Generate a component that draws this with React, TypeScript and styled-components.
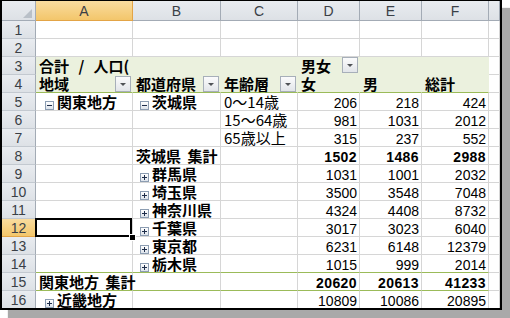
import React from 'react';
import styled, { createGlobalStyle, css } from 'styled-components';

const GRID = '#d6d6d6';
const BAND = '#ebf1de';
const GREEN = '#9bbb59';
const HEAD_LINE = '#a3abb5';

const Global = createGlobalStyle`
  html, body { margin: 0; padding: 0; background: #fff; }
  body { width: 510px; height: 318px; overflow: hidden; }
`;

const Frame = styled.div`
  box-sizing: border-box;
  width: 502px;
  height: 310px;
  border: 2px solid #000;
  border-top-width: 1px;
  box-shadow: 8px 8px 1px #a9a9a9;
  background: #fff;
  overflow: hidden;
`;

const Sheet = styled.div`
  display: grid;
  grid-template-columns: 34px 97px 88px 77px 62px 62px 67px 1fr;
  grid-template-rows: 20px repeat(16, 18px);
`;

const Corner = styled.div`
  box-sizing: border-box;
  display: flex;
  align-items: flex-end;
  justify-content: flex-end;
  padding: 0 3px 2px 0;
  background: linear-gradient(#e9ecf0, #dde1e6);
  border-right: 1px solid ${HEAD_LINE};
  border-bottom: 1px solid ${HEAD_LINE};
`;

const CornerMark = styled.span`
  width: 0;
  height: 0;
  border-left: 9px solid transparent;
  border-bottom: 9px solid #b9c0c8;
`;

const headFace = css<{ $on?: boolean }>`
  box-sizing: border-box;
  font-family: 'Liberation Sans', 'DejaVu Sans', sans-serif;
  font-size: 14px;
  color: #3a3f46;
  text-align: center;
  background: ${(p) =>
    p.$on ? 'linear-gradient(#f9dc9f, #f3c66b)' : 'linear-gradient(#e9ecf0, #dde1e6)'};
`;

const ColHead = styled.div<{ $on?: boolean }>`
  ${headFace};
  line-height: 17px;
  padding-top: 2px;
  border-right: 1px solid ${(p) => (p.$on ? '#e3a446' : HEAD_LINE)};
  border-bottom: 1px solid ${(p) => (p.$on ? '#e3a446' : HEAD_LINE)};
`;

const RowHead = styled.div<{ $on?: boolean }>`
  ${headFace};
  line-height: 15px;
  padding-top: 2px;
  border-right: 1px solid ${(p) => (p.$on ? '#e3a446' : HEAD_LINE)};
  border-bottom: 1px solid ${(p) => (p.$on ? '#e3a446' : '#c3c9d0')};
`;

const Cell = styled.div<{
  $band?: boolean;
  $line?: boolean;
  $num?: boolean;
  $active?: boolean;
}>`
  position: relative;
  box-sizing: border-box;
  min-width: 0;
  display: flex;
  align-items: flex-start;
  justify-content: ${(p) => (p.$num ? 'flex-end' : 'flex-start')};
  padding: 0 ${(p) => (p.$num ? '2px' : '0')} 0 3px;
  background: ${(p) => (p.$band ? BAND : 'transparent')};
  border-right: 1px solid ${(p) => (p.$band ? BAND : GRID)};
  border-bottom: 1px solid ${(p) => (p.$line ? GREEN : p.$band ? BAND : GRID)};

  ${(p) =>
    p.$active &&
    css`
      &::before {
        content: '';
        position: absolute;
        z-index: 2;
        inset: -1px 0 -1px -1px;
        border: 2px solid #000;
      }
      &::after {
        content: '';
        position: absolute;
        z-index: 3;
        right: -3px;
        bottom: -4px;
        width: 5px;
        height: 5px;
        background: #000;
        box-shadow: 0 0 0 1px #fff;
      }
    `}
`;

const Label = styled.span<{ $bold?: boolean; $ws?: number }>`
  font-family: 'Noto Sans CJK JP', 'Liberation Sans', sans-serif;
  font-size: 15px;
  line-height: 17px;
  font-weight: ${(p) => (p.$bold ? 700 : 400)};
  word-spacing: ${(p) => p.$ws ?? 3}px;
  color: #000;
  white-space: nowrap;
`;

const Num = styled.span<{ $bold?: boolean }>`
  font-family: 'Liberation Sans', 'DejaVu Sans', sans-serif;
  font-size: 14px;
  line-height: 17px;
  padding-top: 2px;
  font-weight: ${(p) => (p.$bold ? 700 : 400)};
  letter-spacing: ${(p) => (p.$bold ? '0.4px' : '0')};
  color: #000;
  white-space: nowrap;
`;

const Toggle = styled.span<{ $open: boolean; $indent: number }>`
  flex: none;
  position: relative;
  box-sizing: border-box;
  width: 9px;
  height: 9px;
  margin: 8px 3px 0 ${(p) => p.$indent}px;
  border: 1px solid #8c9db2;
  background: linear-gradient(#ffffff, #dde3eb);

  &::before {
    content: '';
    position: absolute;
    left: 1px;
    right: 1px;
    top: 3px;
    height: 1px;
    background: #1e2d4a;
  }
  &::after {
    content: '';
    display: ${(p) => (p.$open ? 'none' : 'block')};
    position: absolute;
    top: 1px;
    bottom: 1px;
    left: 3px;
    width: 1px;
    background: #1e2d4a;
  }
`;

const Filter = styled.span<{ $at: 'top' | 'bottom' }>`
  flex: none;
  box-sizing: border-box;
  width: 16px;
  height: 16px;
  margin-left: auto;
  margin-right: 1px;
  align-self: ${(p) => (p.$at === 'top' ? 'flex-start' : 'flex-end')};
  display: flex;
  align-items: center;
  justify-content: center;
  border: 1px solid #a7afb9;
  background: linear-gradient(#fbfbfc, #e2e5e9);

  &::after {
    content: '';
    width: 0;
    height: 0;
    margin-top: 1px;
    border-left: 3px solid transparent;
    border-right: 3px solid transparent;
    border-top: 3px solid #4f5256;
  }
`;

type Spec = {
  t: string;
  b?: boolean;
  n?: boolean;
  ws?: number;
  tog?: 'open' | 'closed';
  ind?: number;
  filter?: 'top' | 'bottom';
};

type RowSpec = { band?: boolean; line?: boolean; cells: (Spec | null)[] };

const COLS = ['A', 'B', 'C', 'D', 'E', 'F', 'G'];

const nums = (vals: number[], b = false): Spec[] =>
  vals.map((v) => ({ t: String(v), n: true, b }));

const pref = (name: string): Spec => ({ t: name, b: true, tog: 'closed', ind: 4 });

const ROWS: RowSpec[] = [
  { cells: [] },
  { cells: [] },
  {
    band: true,
    cells: [{ t: '合計 / 人口(', b: true, ws: 6 }, null, null, { t: '男女', b: true, filter: 'top' }],
  },
  {
    band: true,
    line: true,
    cells: [
      { t: '地域', b: true, filter: 'bottom' },
      { t: '都道府県', b: true, filter: 'bottom' },
      { t: '年齢層', b: true, filter: 'bottom' },
      { t: '女', b: true },
      { t: '男', b: true },
      { t: '総計', b: true },
    ],
  },
  {
    cells: [
      { t: '関東地方', b: true, tog: 'open', ind: 6 },
      { t: '茨城県', b: true, tog: 'open', ind: 4 },
      { t: '0～14歳' },
      ...nums([206, 218, 424]),
    ],
  },
  { cells: [null, null, { t: '15～64歳' }, ...nums([981, 1031, 2012])] },
  { cells: [null, null, { t: '65歳以上' }, ...nums([315, 237, 552])] },
  { cells: [null, { t: '茨城県 集計', b: true }, null, ...nums([1502, 1486, 2988], true)] },
  { cells: [null, pref('群馬県'), null, ...nums([1031, 1001, 2032])] },
  { cells: [null, pref('埼玉県'), null, ...nums([3500, 3548, 7048])] },
  { cells: [null, pref('神奈川県'), null, ...nums([4324, 4408, 8732])] },
  { cells: [null, pref('千葉県'), null, ...nums([3017, 3023, 6040])] },
  { cells: [null, pref('東京都'), null, ...nums([6231, 6148, 12379])] },
  { line: true, cells: [null, pref('栃木県'), null, ...nums([1015, 999, 2014])] },
  { line: true, cells: [{ t: '関東地方 集計', b: true }, null, null, ...nums([20620, 20613, 41233], true)] },
  {
    cells: [{ t: '近畿地方', b: true, tog: 'closed', ind: 6 }, null, null, ...nums([10809, 10086, 20895])],
  },
];

const ACTIVE = { row: 12, col: 'A' };

function Content({ spec }: { spec: Spec }) {
  if (spec.n) return <Num $bold={spec.b}>{spec.t}</Num>;
  return (
    <>
      {spec.tog && <Toggle $open={spec.tog === 'open'} $indent={spec.ind ?? 4} />}
      <Label $bold={spec.b} $ws={spec.ws}>
        {spec.t}
      </Label>
      {spec.filter && <Filter $at={spec.filter} />}
    </>
  );
}

export default function App() {
  return (
    <>
      <Global />
      <Frame>
        <Sheet>
          <Corner>
            <CornerMark />
          </Corner>
          {COLS.map((c) => (
            <ColHead key={c} $on={c === ACTIVE.col}>
              {c === 'G' ? '' : c}
            </ColHead>
          ))}
          {ROWS.map((row, i) => {
            const r = i + 1;
            return (
              <React.Fragment key={r}>
                <RowHead $on={r === ACTIVE.row}>{r}</RowHead>
                {COLS.map((c, ci) => {
                  const spec = row.cells[ci] ?? null;
                  const inPivot = ci < 6;
                  return (
                    <Cell
                      key={c}
                      $band={row.band && inPivot}
                      $line={row.line && inPivot}
                      $num={spec?.n}
                      $active={r === ACTIVE.row && c === ACTIVE.col}
                    >
                      {spec && <Content spec={spec} />}
                    </Cell>
                  );
                })}
              </React.Fragment>
            );
          })}
        </Sheet>
      </Frame>
    </>
  );
}
